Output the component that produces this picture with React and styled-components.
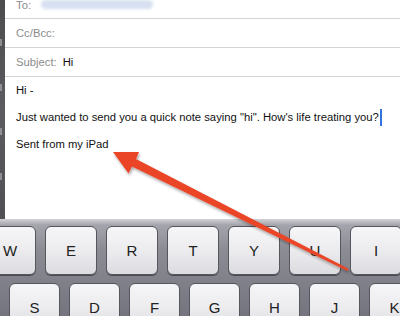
import React from 'react';
import styled, { createGlobalStyle } from 'styled-components';

const GlobalStyle = createGlobalStyle`
  html, body {
    margin: 0;
    padding: 0;
    width: 400px;
    height: 316px;
    overflow: hidden;
    background: #7a7a84;
  }
  body {
    font-family: "Liberation Sans", Arial, sans-serif;
  }
`;

const Screen = styled.div`
  position: relative;
  width: 400px;
  height: 316px;
  overflow: hidden;
`;

const Top = styled.div`
  display: flex;
  height: 219px;
`;

const Backdrop = styled.div`
  width: 5px;
  flex: none;
  background: linear-gradient(180deg, #4c4c4e 0%, #5c5c60 50%, #505054 100%);
  display: flex;
  flex-direction: column;
  justify-content: space-around;
  padding: 20px 0;
  box-sizing: border-box;
`;

const Ghost = styled.span`
  display: block;
  width: 2px;
  height: 7px;
  background: #a8a8aa;
  opacity: 0.7;
`;

const Sheet = styled.div`
  flex: 1;
  background: #fff;
  overflow: hidden;
  display: flex;
  flex-direction: column;
`;

const Field = styled.div`
  display: flex;
  align-items: center;
  gap: 6px;
  height: 28px;
  flex: none;
  padding-left: 11px;
  border-bottom: 1px solid #d4d4d4;
  font-size: 11.25px;
  color: #111;
  &:first-child {
    margin-top: -9px;
    height: 27px;
  }
`;

const Label = styled.span`
  color: #8c8c8c;
`;

const Blurred = styled.span`
  display: inline-block;
  width: 112px;
  height: 9px;
  margin-left: 4px;
  border-radius: 5px;
  background: #d6e0f0;
  filter: blur(1.5px);
`;

const Body = styled.div`
  padding-left: 11px;
  font-size: 11.25px;
  line-height: 27px;
  color: #111;
`;

const Line = styled.div`
  white-space: nowrap;
`;

const Caret = styled.span`
  display: inline-block;
  width: 2px;
  height: 17px;
  margin-left: 1px;
  vertical-align: -5px;
  background: #2f72e0;
`;

const Keyboard = styled.div`
  height: 97px;
  padding-top: 7px;
  box-sizing: border-box;
  background: linear-gradient(180deg, #d2d2d6 0px, #a4a4ac 6px, #8c8c95 30px, #74747e 100%);
  display: flex;
  flex-direction: column;
  gap: 8px;
  overflow: hidden;
`;

const KeyRow = styled.div`
  display: flex;
  gap: 9px;
  margin-left: ${p => p.$offset}px;
`;

const Key = styled.div`
  flex: none;
  width: ${p => p.$w}px;
  height: 49px;
  box-sizing: border-box;
  border: 1px solid #56565e;
  border-radius: 6px;
  background: linear-gradient(180deg, #f6f6f8 0%, #ececef 50%, #dcdce0 100%);
  box-shadow: 0 1px 0 #4a4a52;
  display: flex;
  align-items: center;
  justify-content: center;
  font-size: 15px;
  color: #222;
`;

const Overlay = styled.svg`
  position: absolute;
  left: 0;
  top: 0;
  pointer-events: none;
`;

const rowOne = ['W', 'E', 'R', 'T', 'Y', 'U', 'I'];
const rowTwo = ['S', 'D', 'F', 'G', 'H', 'J', 'K'];

const Arrow = () => (
  <Overlay width="400" height="316" viewBox="0 0 400 316">
    <defs>
      <filter id="shade" x="-10%" y="-10%" width="130%" height="130%">
        <feDropShadow dx="1" dy="2" stdDeviation="1.5" floodColor="#000" floodOpacity="0.35" />
      </filter>
    </defs>
    <polygon
      points="113,152 139,152 136,159 348.5,268.8 347.5,271 132,166.6 128.5,173.5"
      fill="#ea4428"
      filter="url(#shade)"
    />
  </Overlay>
);

const App = () => (
  <Screen>
    <GlobalStyle />
    <Top>
      <Backdrop>
        <Ghost />
        <Ghost />
        <Ghost />
        <Ghost />
      </Backdrop>
      <Sheet>
        <Field>
          <Label>To:</Label>
          <Blurred />
        </Field>
        <Field>
          <Label>Cc/Bcc:</Label>
        </Field>
        <Field>
          <Label>Subject:</Label>
          <span>Hi</span>
        </Field>
        <Body>
          <Line>Hi -</Line>
          <Line>
            Just wanted to send you a quick note saying "hi". How's life treating you?
            <Caret />
          </Line>
          <Line>Sent from my iPad</Line>
        </Body>
      </Sheet>
    </Top>
    <Keyboard>
      <KeyRow $offset={-16}>
        {rowOne.map(k => (
          <Key key={k} $w={52}>{k}</Key>
        ))}
      </KeyRow>
      <KeyRow $offset={9}>
        {rowTwo.map(k => (
          <Key key={k} $w={51}>{k}</Key>
        ))}
      </KeyRow>
    </Keyboard>
    <Arrow />
  </Screen>
);

export default App;
